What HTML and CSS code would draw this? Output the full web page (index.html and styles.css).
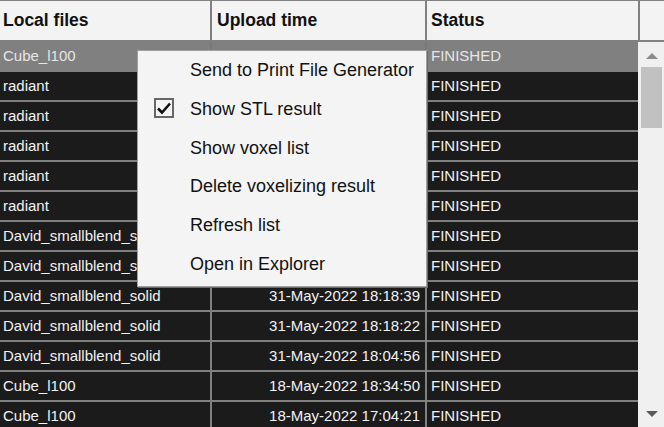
FILE: index.html
```html
<!DOCTYPE html>
<html lang="en">
<head>
    <meta charset="UTF-8">
    <meta name="viewport" content="width=device-width, initial-scale=1.0">
    <title>Local files</title>
    <link rel="stylesheet" href="styles.css">
</head>
<body>
    <div class="table">
        <div class="head">
            <div class="th">Local files</div>
            <div class="th">Upload time</div>
            <div class="th">Status</div>
            <div class="th"></div>
        </div>
        <div class="body">
            <div class="rows">
                <!-- upload times of the first rows sit under the context menu -->
                <div class="row selected"><div class="cell">Cube_l100</div><div class="cell date"></div><div class="cell">FINISHED</div></div>
                <div class="row"><div class="cell">radiant</div><div class="cell date"></div><div class="cell">FINISHED</div></div>
                <div class="row"><div class="cell">radiant</div><div class="cell date"></div><div class="cell">FINISHED</div></div>
                <div class="row"><div class="cell">radiant</div><div class="cell date"></div><div class="cell">FINISHED</div></div>
                <div class="row"><div class="cell">radiant</div><div class="cell date"></div><div class="cell">FINISHED</div></div>
                <div class="row"><div class="cell">radiant</div><div class="cell date"></div><div class="cell">FINISHED</div></div>
                <div class="row"><div class="cell">David_smallblend_solid</div><div class="cell date"></div><div class="cell">FINISHED</div></div>
                <div class="row"><div class="cell">David_smallblend_solid</div><div class="cell date"></div><div class="cell">FINISHED</div></div>
                <div class="row"><div class="cell">David_smallblend_solid</div><div class="cell date">31-May-2022 18:18:39</div><div class="cell">FINISHED</div></div>
                <div class="row"><div class="cell">David_smallblend_solid</div><div class="cell date">31-May-2022 18:18:22</div><div class="cell">FINISHED</div></div>
                <div class="row"><div class="cell">David_smallblend_solid</div><div class="cell date">31-May-2022 18:04:56</div><div class="cell">FINISHED</div></div>
                <div class="row"><div class="cell">Cube_l100</div><div class="cell date">18-May-2022 18:34:50</div><div class="cell">FINISHED</div></div>
                <div class="row"><div class="cell">Cube_l100</div><div class="cell date">18-May-2022 17:04:21</div><div class="cell">FINISHED</div></div>
            </div>
            <div class="scrollbar">
                <div class="arrow up"></div>
                <div class="thumb"></div>
                <div class="track"></div>
                <div class="arrow down"></div>
            </div>
        </div>
    </div>

    <div class="menu">
        <div class="item">Send to Print File Generator</div>
        <div class="item">
            <span class="check">
                <svg width="16" height="16" viewBox="0 0 16 16"><path d="M2 8.5 L6 12.5 L14 3.5" fill="none" stroke="#111" stroke-width="2.6"/></svg>
            </span>
            Show STL result
        </div>
        <div class="item">Show voxel list</div>
        <div class="item">Delete voxelizing result</div>
        <div class="item">Refresh list</div>
        <div class="item">Open in Explorer</div>
    </div>
</body>
</html>
```

FILE: styles.css
```css
body {
    margin: 0;
    font-family: "Liberation Sans", Arial, sans-serif;
    background-color: #808080;
    overflow: hidden;
    height: 427px;
}

.table {
    width: 664px;
}

.head {
    display: grid;
    grid-template-columns: 210px 213px 211px 24px;
    column-gap: 2px;
    padding-top: 1px;
    padding-bottom: 2px;
    background-color: #808080;
}

.th {
    height: 39px;
    line-height: 39px;
    background-color: #f3f3f3;
    color: #111;
    font-size: 17.5px;
    font-weight: bold;
    padding-left: 3px;
}

.th:nth-child(2) {
    padding-left: 5px;
}

.th:nth-child(3) {
    padding-left: 4px;
}

.body {
    display: flex;
}

.rows {
    width: 638px;
    display: flex;
    flex-direction: column;
    gap: 2px;
    background-color: #808080;
}

.row {
    display: grid;
    grid-template-columns: 210px 213px 211px;
    column-gap: 2px;
    height: 28px;
}

.cell {
    background-color: #1b1b1b;
    color: #f2f2f2;
    font-size: 15px;
    line-height: 28px;
    padding-left: 3px;
    white-space: nowrap;
    overflow: hidden;
}

.cell:nth-child(3) {
    padding-left: 4px;
}

.cell.date {
    text-align: right;
    padding-left: 0;
    padding-right: 5px;
}

.row.selected {
    background-color: #7a7a7a;
}

.row.selected .cell {
    background-color: #808080;
    color: #e6e6e6;
    height: 30px;
}

.scrollbar {
    width: 26px;
    height: 385px;
    background-color: #f0f0f0;
    display: flex;
    flex-direction: column;
    align-items: center;
    padding-left: 1px;
    box-sizing: border-box;
}

.arrow {
    width: 0;
    height: 0;
    border-left: 6px solid transparent;
    border-right: 6px solid transparent;
}

.arrow.up {
    margin-top: 11px;
    border-bottom: 6px solid #8a8a8a;
}

.arrow.down {
    border-top: 6px solid #5a5a5a;
    margin-bottom: 10px;
}

.thumb {
    width: 21px;
    height: 61px;
    margin-top: 8px;
    background-color: #c1c1c1;
}

.track {
    flex: 1;
}

.menu {
    position: absolute;
    left: 137px;
    top: 50px;
    width: 288px;
    padding: 0 0 2px;
    background-color: #f4f4f4;
    border: 1px solid #a0a0a0;
    box-shadow: 1px 1px 0 #6a6a6a;
}

.item {
    position: relative;
    height: 38.8px;
    line-height: 38px;
    padding-left: 52px;
    font-size: 18px;
    color: #111;
    white-space: nowrap;
}

.check {
    position: absolute;
    left: 16px;
    top: 8px;
    width: 16px;
    height: 16px;
    border: 2px solid #666;
    display: flex;
    align-items: center;
    justify-content: center;
}
```
